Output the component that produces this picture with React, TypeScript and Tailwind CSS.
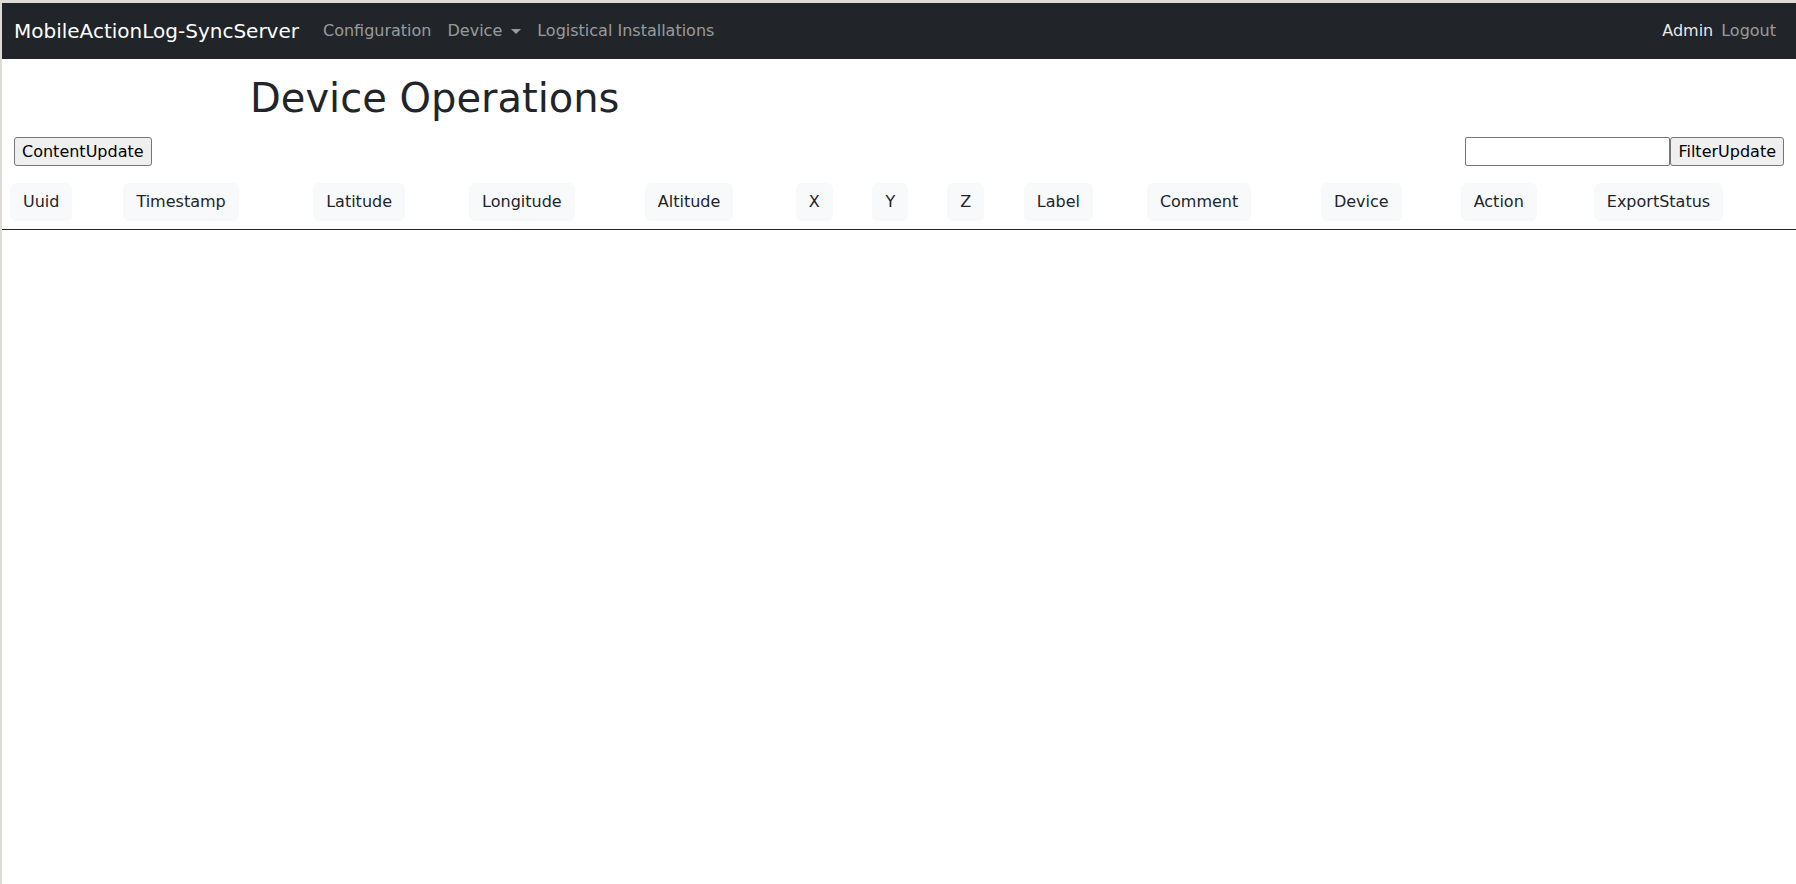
import React from "react";

const cols = [
  "Uuid",
  "Timestamp",
  "Latitude",
  "Longitude",
  "Altitude",
  "X",
  "Y",
  "Z",
  "Label",
  "Comment",
  "Device",
  "Action",
  "ExportStatus",
];

export default function App() {
  return (
    <div
      className="min-h-[884px] bg-white border-t-[3px] border-l-2 border-[#dedad6] text-[#212529] text-[16px] leading-6"
      style={{ fontFamily: '"DejaVu Sans", "Noto Sans", sans-serif' }}
    >
      <nav className="bg-[#212529] h-[56px] px-3 flex items-center">
        <span className="text-white text-[20px] leading-[30px] py-[5px] mr-4">
          MobileActionLog-SyncServer
        </span>
        <div className="flex items-center">
          <span className="px-2 py-2 text-[rgba(255,255,255,0.55)]">Configuration</span>
          <span className="px-2 py-2 text-[rgba(255,255,255,0.55)] flex items-center">
            Device
            <span className="ml-[9px] mt-[1px] inline-block w-0 h-0 border-l-[5px] border-r-[5px] border-t-[5px] border-l-transparent border-r-transparent border-t-[rgba(255,255,255,0.55)]"></span>
          </span>
          <span className="px-2 py-2 text-[rgba(255,255,255,0.55)]">Logistical Installations</span>
        </div>
        <div className="ml-auto flex items-center">
          <span className="text-[rgba(255,255,255,0.92)]">Admin</span>
          <span className="px-2 py-2 text-[rgba(255,255,255,0.55)]">Logout</span>
        </div>
      </nav>

      <h1 className="mt-[15px] pl-[248px] text-[40px] leading-[48px] font-normal">
        Device Operations
      </h1>

      <div className="mt-[15px] px-3 flex items-center justify-between">
        <button className="h-[29px] px-[7px] border border-[#767676] rounded-[3px] bg-[#efefef] text-[16px] leading-6 text-black">
          ContentUpdate
        </button>
        <div className="flex items-center">
          <input
            type="text"
            className="h-[29px] w-[205px] border border-[#767676] rounded-[2px] px-[2px] bg-white"
          />
          <button className="h-[29px] px-[7px] border border-[#767676] rounded-[3px] bg-[#efefef] text-[16px] leading-6 text-black">
            FilterUpdate
          </button>
        </div>
      </div>

      <table className="mt-[9px] w-full border-collapse">
        <thead>
          <tr className="border-b border-[#212529]">
            {cols.map((c) => (
              <th key={c} className="p-2 text-left font-normal">
                <span className="inline-block px-3 py-[6px] border border-[#f8f9fa] bg-[#f8f9fa] rounded-md leading-6 whitespace-nowrap">
                  {c}
                </span>
              </th>
            ))}
          </tr>
        </thead>
        <tbody></tbody>
      </table>
    </div>
  );
}
